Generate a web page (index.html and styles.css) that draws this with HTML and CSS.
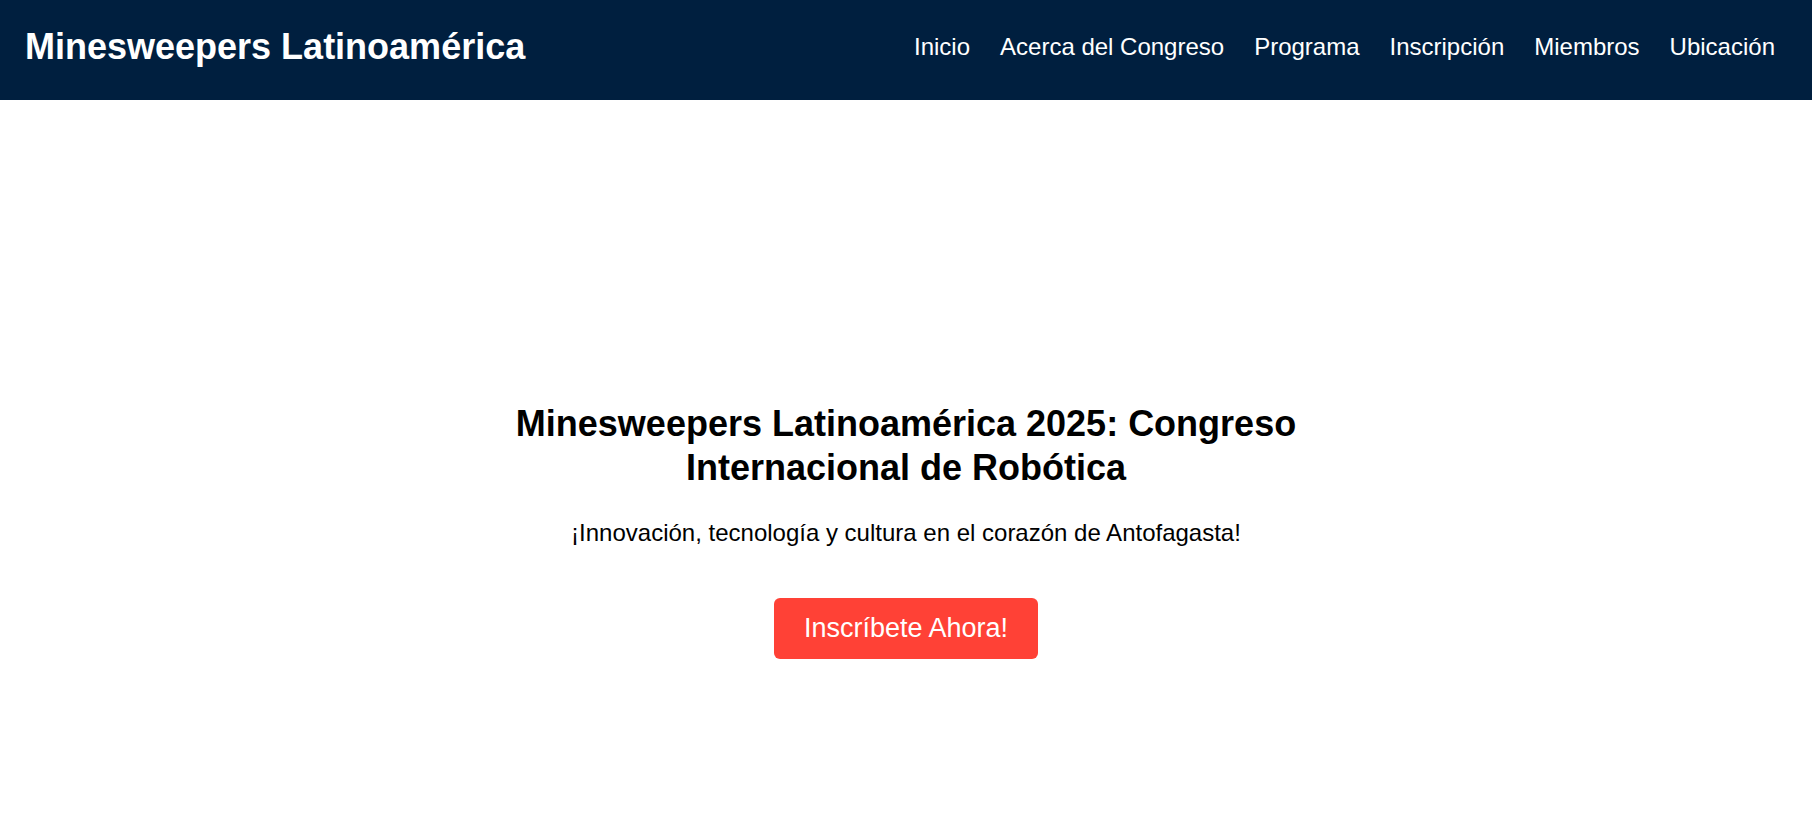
FILE: index.html
```html
<!DOCTYPE html>
<html lang="es">
<head>
<meta charset="utf-8">
<title>Minesweepers Latinoamérica</title>
<link rel="stylesheet" href="styles.css">
</head>
<body>
<header class="site-header">
  <div class="logo">Minesweepers Latinoamérica</div>
  <nav class="main-nav">
    <a href="#">Inicio</a>
    <a href="#">Acerca del Congreso</a>
    <a href="#">Programa</a>
    <a href="#">Inscripción</a>
    <a href="#">Miembros</a>
    <a href="#">Ubicación</a>
  </nav>
</header>
<main class="hero">
  <div class="hero-content">
    <h1 class="hero-title">Minesweepers Latinoamérica 2025: Congreso Internacional de Robótica</h1>
    <p class="hero-subtitle">¡Innovación, tecnología y cultura en el corazón de Antofagasta!</p>
    <a class="cta" href="#">Inscríbete Ahora!</a>
  </div>
</main>
</body>
</html>
```
FILE: styles.css
```css
* { box-sizing: border-box; }
html, body { margin: 0; padding: 0; }
body {
  font-family: "Liberation Sans", Arial, sans-serif;
  color: #000;
  background: #fff;
}
.site-header {
  height: 100px;
  background: #001f3f;
  color: #fff;
  display: flex;
  align-items: center;
  justify-content: space-between;
  padding: 0 37px 6px 25px;
}
.logo {
  font-size: 36px;
  font-weight: bold;
}
.main-nav {
  display: flex;
  gap: 30px;
}
.main-nav a {
  color: #fff;
  text-decoration: none;
  font-size: 24px;
}
.hero {
  display: flex;
  justify-content: center;
  padding-top: 302px;
}
.hero-content {
  max-width: 800px;
  text-align: center;
  display: flex;
  flex-direction: column;
  align-items: center;
}
.hero-title {
  font-size: 36px;
  line-height: 44px;
  margin: 0;
}
.hero-subtitle {
  font-size: 24px;
  margin: 29px 0 51px;
}
.cta {
  display: inline-block;
  background: #ff4136;
  color: #fff;
  text-decoration: none;
  font-size: 27px;
  line-height: 31px;
  padding: 15px 30px;
  border-radius: 6px;
}
```
